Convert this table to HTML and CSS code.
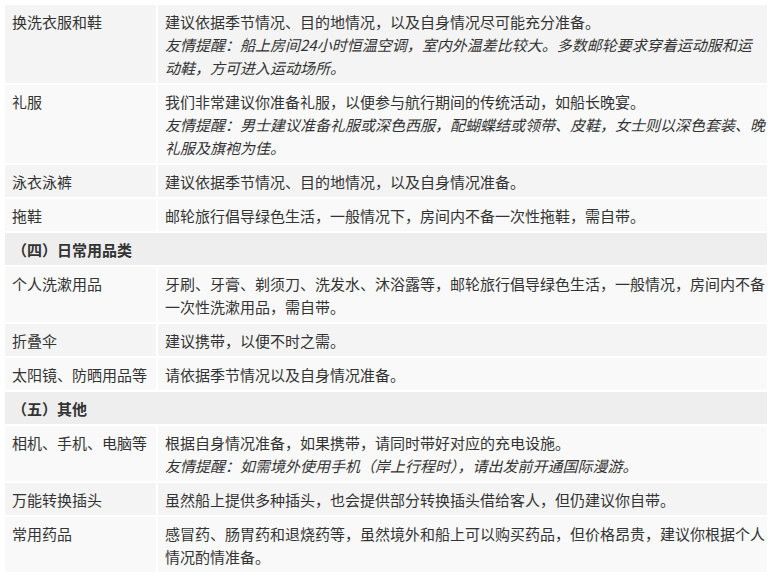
FILE: index.html
```html
<!DOCTYPE html>
<html lang="zh-CN">
<head>
<meta charset="utf-8">
<link rel="stylesheet" href="styles.css">
</head>
<body>
<table class="list">
  <tr>
    <td class="name">换洗衣服和鞋</td>
    <td class="desc">建议依据季节情况、目的地情况，以及自身情况尽可能充分准备。<span class="tip">友情提醒：船上房间24小时恒温空调，室内外温差比较大。多数邮轮要求穿着运动服和运动鞋，方可进入运动场所。</span></td>
  </tr>
  <tr>
    <td class="name">礼服</td>
    <td class="desc">我们非常建议你准备礼服，以便参与航行期间的传统活动，如船长晚宴。<span class="tip">友情提醒：男士建议准备礼服或深色西服，配蝴蝶结或领带、皮鞋，女士则以深色套装、晚礼服及旗袍为佳。</span></td>
  </tr>
  <tr>
    <td class="name">泳衣泳裤</td>
    <td class="desc">建议依据季节情况、目的地情况，以及自身情况准备。</td>
  </tr>
  <tr>
    <td class="name">拖鞋</td>
    <td class="desc">邮轮旅行倡导绿色生活，一般情况下，房间内不备一次性拖鞋，需自带。</td>
  </tr>
  <tr class="section">
    <td colspan="2">（四）日常用品类</td>
  </tr>
  <tr>
    <td class="name">个人洗漱用品</td>
    <td class="desc">牙刷、牙膏、剃须刀、洗发水、沐浴露等，邮轮旅行倡导绿色生活，一般情况，房间内不备一次性洗漱用品，需自带。</td>
  </tr>
  <tr>
    <td class="name">折叠伞</td>
    <td class="desc">建议携带，以便不时之需。</td>
  </tr>
  <tr>
    <td class="name">太阳镜、防晒用品等</td>
    <td class="desc">请依据季节情况以及自身情况准备。</td>
  </tr>
  <tr class="section">
    <td colspan="2">（五）其他</td>
  </tr>
  <tr>
    <td class="name">相机、手机、电脑等</td>
    <td class="desc">根据自身情况准备，如果携带，请同时带好对应的充电设施。<span class="tip">友情提醒：如需境外使用手机（岸上行程时），请出发前开通国际漫游。</span></td>
  </tr>
  <tr>
    <td class="name">万能转换插头</td>
    <td class="desc">虽然船上提供多种插头，也会提供部分转换插头借给客人，但仍建议你自带。</td>
  </tr>
  <tr>
    <td class="name">常用药品</td>
    <td class="desc">感冒药、肠胃药和退烧药等，虽然境外和船上可以购买药品，但价格昂贵，建议你根据个人情况酌情准备。</td>
  </tr>
</table>
</body>
</html>
```

FILE: styles.css
```css
html, body {
  margin: 0;
  padding: 0;
  background: #ffffff;
}

body {
  font-family: "Noto Sans CJK SC", "Noto Sans", sans-serif;
  font-size: 15px;
  line-height: 23px;
  color: #333333;
}

.list {
  margin: 3px 0 0 3px;
  width: 766px;
  table-layout: fixed;
  border-collapse: separate;
  border-spacing: 2px;
}

.list td {
  vertical-align: top;
  padding: 5px 7px 4px 7px;
  word-break: break-all;
}

.list tr:nth-child(odd) td {
  background: #f4f4f4;
}

.list tr:nth-child(even) td {
  background: #f9f9f9;
}

.list td.name {
  width: 137px;
}

.list td.desc {
  width: 600px;
  padding-right: 2px;
}

.list tr.section td {
  background: #eeeeee;
  font-weight: bold;
}

.tip {
  display: block;
  font-style: italic;
}
```
